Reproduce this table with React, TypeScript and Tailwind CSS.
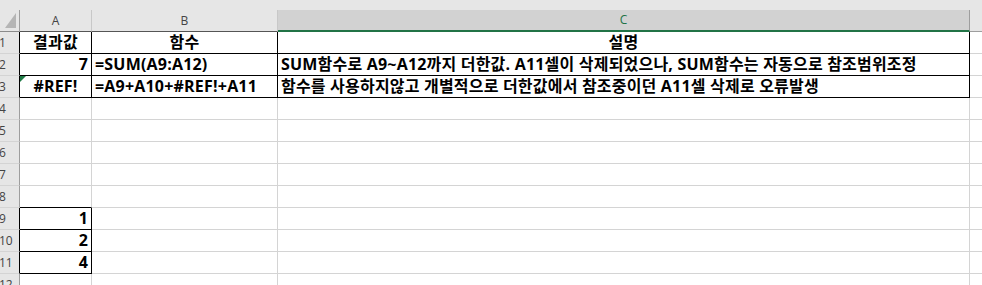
const font = { fontFamily: '"Open Sans", "Noto Sans CJK KR", sans-serif' };

type Cell = {
  text?: string;
  align?: "left" | "center" | "right";
  right?: boolean;
  bottom?: boolean;
  error?: boolean;
};

const GRID = "border-[#d4d4d4]";

const rows: { n: number; cells: Cell[]; edge?: boolean }[] = [
  {
    n: 1,
    edge: true,
    cells: [
      { text: "결과값", align: "center", right: true, bottom: true },
      { text: "함수", align: "center", right: true, bottom: true },
      { text: "설명", align: "center", right: true, bottom: true },
    ],
  },
  {
    n: 2,
    edge: true,
    cells: [
      { text: "7", align: "right", right: true, bottom: true },
      { text: "=SUM(A9:A12)", right: true, bottom: true },
      {
        text: "SUM함수로 A9~A12까지 더한값. A11셀이 삭제되었으나, SUM함수는 자동으로 참조범위조정",
        right: true,
        bottom: true,
      },
    ],
  },
  {
    n: 3,
    edge: true,
    cells: [
      { text: "#REF!", align: "center", right: true, bottom: true, error: true },
      { text: "=A9+A10+#REF!+A11", right: true, bottom: true },
      {
        text: "함수를 사용하지않고 개별적으로 더한값에서 참조중이던 A11셀 삭제로 오류발생",
        right: true,
        bottom: true,
      },
    ],
  },
  { n: 4, cells: [{}, {}, {}] },
  { n: 5, cells: [{}, {}, {}] },
  { n: 6, cells: [{}, {}, {}] },
  { n: 7, cells: [{}, {}, {}] },
  { n: 8, cells: [{ bottom: true }, {}, {}] },
  { n: 9, edge: true, cells: [{ text: "1", align: "right", right: true, bottom: true }, {}, {}] },
  { n: 10, edge: true, cells: [{ text: "2", align: "right", right: true, bottom: true }, {}, {}] },
  { n: 11, edge: true, cells: [{ text: "4", align: "right", right: true, bottom: true }, {}, {}] },
  { n: 12, cells: [{}, {}, {}] },
];

function DataCell({ cell }: { cell: Cell }) {
  const justify =
    cell.align === "center" ? "justify-center" : cell.align === "right" ? "justify-end" : "justify-start";
  return (
    <div
      className={`relative flex h-[22px] items-end overflow-visible whitespace-nowrap border-r border-b px-[3px] pb-[1px] text-[16px] leading-[20px] font-bold tracking-[0.2px] text-black ${justify} ${
        cell.right ? "border-r-black" : "border-r-[#d4d4d4]"
      } ${cell.bottom ? "border-b-black" : "border-b-[#d4d4d4]"}`}
    >
      {cell.error && (
        <svg className="absolute left-0 top-0" width="6" height="6" viewBox="0 0 6 6">
          <polygon points="0,0 6,0 0,6" fill="#1e7b45" />
        </svg>
      )}
      {cell.text}
    </div>
  );
}

export default function App() {
  return (
    <div className="h-[285px] w-[982px] overflow-hidden bg-white" style={font}>
      <div className="h-[10px] bg-[#e6e6e6]" />
      <div className="grid grid-cols-[20px_72px_186px_692px_12px]">
        {/* column headers */}
        <div className="relative h-[22px] border-r border-b border-r-[#9e9e9e] border-b-[#8a8a8a] bg-[#e6e6e6]">
          <svg className="absolute left-[5px] top-[3px]" width="12" height="16" viewBox="0 0 12 16">
            <polygon points="11,0 11,15 0,15" fill="#b5b5b5" />
          </svg>
        </div>
        <div className="flex h-[22px] items-center justify-center border-r border-b border-r-[#c8c8c8] border-b-[#555555] bg-[#e6e6e6] text-[12px] text-[#444444]">
          A
        </div>
        <div className="flex h-[22px] items-center justify-center border-r border-b border-r-[#c8c8c8] border-b-[#555555] bg-[#e6e6e6] text-[12px] text-[#444444]">
          B
        </div>
        <div className="flex h-[22px] items-center justify-center border-r border-b-2 border-r-[#9e9e9e] border-b-[#217346] bg-[#d2d2d2] text-[12px] text-[#217346]">
          C
        </div>
        <div className="h-[22px] border-b border-b-[#9e9e9e] bg-[#e6e6e6]" />

        {rows.map((r) => (
          <div key={r.n} className="contents">
            <div
              className={`flex h-[22px] items-center justify-start border-r border-b border-b-[#d4d4d4] bg-[#e6e6e6] pl-0 text-[12px] leading-none text-[#444444] ${
                r.edge ? "border-r-black" : "border-r-[#9e9e9e]"
              }`}
            >
              <span className="-ml-[1px]">{r.n}</span>
            </div>
            {r.cells.map((c, i) => (
              <DataCell key={i} cell={c} />
            ))}
            <div className={`h-[22px] border-b ${GRID}`} />
          </div>
        ))}
      </div>
    </div>
  );
}
